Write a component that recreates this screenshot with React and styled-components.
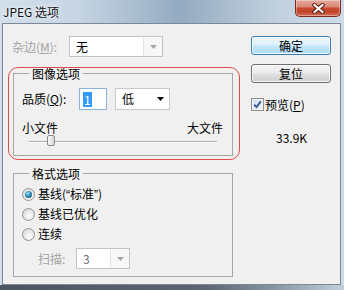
import React from "react";
import styled, { createGlobalStyle } from "styled-components";

const FONT = `"Noto Sans CJK SC", "Noto Sans", sans-serif`;

const GlobalStyle = createGlobalStyle`
  html, body { margin: 0; padding: 0; }
  body { width: 344px; height: 290px; overflow: hidden; font-family: ${FONT}; }
`;

const Window = styled.div`
  width: 344px;
  height: 290px;
  box-sizing: border-box;
  display: flex;
  flex-direction: column;
  padding: 0 3px 5px 2px;
  background:
    linear-gradient(90deg, #4d5560 0%, #5d6670 60%, #8896a5 80%, #c2d0de 100%) bottom / 100% 5px no-repeat,
    linear-gradient(90deg, #d2dfeb 0%, #c6d5e4 22%, #a9bdd0 40%, #93aac1 52%, #a7bacd 64%, #c3d2e0 82%, #cfdce8 100%);
  font-family: ${FONT};
  font-size: 12px;
  color: #000;
`;

const TitleBar = styled.div`
  height: 23px;
  flex: none;
  display: flex;
  align-items: flex-start;
  justify-content: space-between;
`;

const Title = styled.div`
  margin: 5px 0 0 1px;
  line-height: 13px;
  color: #111;
  text-shadow: 0 0 6px rgba(255, 255, 255, 0.9), 0 0 2px rgba(255, 255, 255, 0.8);
`;

const CloseButton = styled.div`
  width: 46px;
  height: 17px;
  box-sizing: border-box;
  border: 1px solid #7b2b1f;
  border-top: none;
  border-radius: 0 0 5px 5px;
  background: linear-gradient(180deg, #e6a99b 0%, #dc8b78 40%, #c94a31 52%, #c0432b 75%, #d8765c 100%);
  box-shadow: inset 0 0 0 1px rgba(255, 255, 255, 0.35);
  display: flex;
  align-items: center;
  justify-content: center;
`;

const Client = styled.div`
  flex: 1;
  display: flex;
  gap: 11px;
  box-sizing: border-box;
  border: 1px solid #7c8896;
  background: #f0f0f0;
  padding: 12px 0 0 5px;
`;

const LeftCol = styled.div`
  width: 232px;
  display: flex;
  flex-direction: column;
`;

const RightCol = styled.div`
  width: 80px;
  display: flex;
  flex-direction: column;
`;

const Row = styled.div`
  display: flex;
  align-items: center;
  height: ${(p) => p.$h || 20}px;
  padding-left: ${(p) => p.$pl || 0}px;
  margin-top: ${(p) => p.$mt || 0}px;
`;

const Label = styled.span`
  width: ${(p) => p.$w}px;
  flex: none;
  line-height: 14px;
  color: ${(p) => (p.$disabled ? "#a3a3a3" : "#000")};
`;

const Mnemonic = styled.span`
  text-decoration: underline;
  text-underline-offset: 1px;
`;

const SelectBox = styled.div`
  width: ${(p) => p.$w}px;
  height: ${(p) => p.$h}px;
  margin-left: ${(p) => p.$ml || 0}px;
  box-sizing: border-box;
  display: flex;
  border: 1px solid ${(p) => (p.$disabled ? "#c3c3c3" : "#c9c9c9")};
  background: #fff;
`;

const SelectValue = styled.span`
  flex: 1;
  padding-left: 6px;
  display: flex;
  align-items: center;
  line-height: 14px;
  color: ${(p) => (p.$disabled ? "#6d6d6d" : "#000")};
`;

const SelectButton = styled.span`
  width: ${(p) => (p.$plain ? 17 : 18)}px;
  flex: none;
  display: flex;
  align-items: center;
  justify-content: center;
  border-left: ${(p) => (p.$plain ? "none" : "1px solid #e4e4e4")};
  background: ${(p) => (p.$plain ? "#fff" : "#f7f7f7")};
`;

const Arrow = ({ color }) => (
  <svg width="7" height="4" viewBox="0 0 7 4">
    <path d="M0 0H7L3.5 4Z" fill={color} />
  </svg>
);

const Highlight = styled.div`
  margin-top: 10px;
  box-sizing: border-box;
  width: 232px;
  border: 1px solid #df4b4b;
  border-radius: 10px;
  padding: 0 6px 3px 4px;
`;

const GroupBox = styled.fieldset`
  margin: ${(p) => p.$m || 0};
  width: 220px;
  min-width: 0;
  box-sizing: border-box;
  border: 1px solid #a6a6a6;
  padding: ${(p) => p.$pad};
`;

const Legend = styled.legend`
  margin-left: 7px;
  padding: 0 3px;
  line-height: 11px;
  font-size: 12px;
`;

const TextInput = styled.div`
  width: 28px;
  height: 22px;
  box-sizing: border-box;
  border: 1px solid #8eb3d9;
  background: #fff;
  padding-left: 3px;
  display: flex;
  align-items: center;
`;

const Selected = styled.span`
  background: #3399ff;
  color: #fff;
  line-height: 15px;
  padding: 0 1px;
`;

const SizeLabels = styled.div`
  display: flex;
  justify-content: space-between;
  margin-top: 11px;
  line-height: 14px;
`;

const Slider = styled.div`
  height: 12px;
  margin: 0 6px 0 7px;
  position: relative;
  display: flex;
  align-items: center;
`;

const Groove = styled.div`
  flex: 1;
  height: 1px;
  background: #aeaeae;
  box-shadow: 0 1px 0 #ffffff;
`;

const Thumb = styled.div`
  position: absolute;
  top: 0;
  width: 8px;
  height: 11px;
  box-sizing: border-box;
  border: 1px solid #8c8c8c;
  border-radius: 2px;
  background: linear-gradient(90deg, #f7f7f7 0%, #e6e6e6 60%, #d4d4d4 100%);
`;

const Radio = styled.span`
  width: 13px;
  height: 13px;
  flex: none;
  box-sizing: border-box;
  border-radius: 50%;
  border: 1px solid #939393;
  background: radial-gradient(circle at 60% 65%, #fbfbfb 0%, #e9e9e9 45%, #d2d2d2 100%);
  display: flex;
  align-items: center;
  justify-content: center;
  margin-right: 3px;
  &::after {
    content: "";
    display: ${(p) => (p.$checked ? "block" : "none")};
    width: 7px;
    height: 7px;
    border-radius: 50%;
    background: radial-gradient(circle at 40% 35%, #a6e6f8 0%, #3492c0 40%, #0f4868 100%);
  }
`;

const RadioText = styled.span`
  line-height: 14px;
`;

const Quote = styled.span`
  font-family: "Liberation Sans", sans-serif;
`;

const Button = styled.div`
  height: 19px;
  box-sizing: border-box;
  margin-top: ${(p) => p.$mt || 0}px;
  border-radius: 3px;
  display: flex;
  align-items: center;
  justify-content: center;
  line-height: 14px;
  border: 1px solid ${(p) => (p.$primary ? "#3c7fb1" : "#707070")};
  background: ${(p) =>
    p.$primary
      ? "linear-gradient(180deg, #edf7fd 0%, #dcf1fc 48%, #c3e6fb 52%, #b0dcf6 100%)"
      : "linear-gradient(180deg, #f3f3f3 0%, #ececec 48%, #dedede 52%, #d0d0d0 100%)"};
  box-shadow: inset 0 0 0 1px rgba(255, 255, 255, 0.75);
`;

const CheckRow = styled.div`
  display: flex;
  align-items: center;
  gap: 1px;
  height: 18px;
  margin-top: 12px;
`;

const CheckBox = styled.span`
  width: 13px;
  height: 13px;
  flex: none;
  box-sizing: border-box;
  border: 1px solid #8f8f8f;
  background: linear-gradient(135deg, #cfdcea 0%, #eef4fa 100%);
  box-shadow: inset 0 0 0 1px #f4f4f4;
  display: flex;
  align-items: center;
  justify-content: center;
`;

const SizeText = styled.div`
  margin-top: 18px;
  padding-left: 25px;
  line-height: 14px;
`;

export default function App() {
  const quality = 1;
  const thumbLeft = Math.round(((quality - 0) / 12) * 188) + 2;
  return (
    <>
      <GlobalStyle />
      <Window>
        <TitleBar>
          <Title>JPEG 选项</Title>
          <CloseButton>
            <svg width="13" height="11" viewBox="0 0 13 11">
              <path d="M2.5 2 L10.5 9 M10.5 2 L2.5 9" stroke="#5a1d13" strokeWidth="4.2" strokeLinecap="square" />
              <path d="M2.5 2 L10.5 9 M10.5 2 L2.5 9" stroke="#ffffff" strokeWidth="2.2" strokeLinecap="square" />
            </svg>
          </CloseButton>
        </TitleBar>
        <Client>
          <LeftCol>
            <Row $h={21} $pl={4}>
              <Label $w={57} $disabled>
                杂边(<Mnemonic>M</Mnemonic>):
              </Label>
              <SelectBox $w={94} $h={21} $disabled>
                <SelectValue>无</SelectValue>
                <SelectButton>
                  <Arrow color="#a6a6a6" />
                </SelectButton>
              </SelectBox>
            </Row>
            <Highlight>
              <GroupBox $pad="9px 9px 8px 8px">
                <Legend>图像选项</Legend>
                <Row $h={22}>
                  <Label $w={57}>
                    品质(<Mnemonic>Q</Mnemonic>):
                  </Label>
                  <TextInput>
                    <Selected>1</Selected>
                  </TextInput>
                  <SelectBox $w={55} $h={22} $ml={8}>
                    <SelectValue>低</SelectValue>
                    <SelectButton $plain>
                      <Arrow color="#000" />
                    </SelectButton>
                  </SelectBox>
                </Row>
                <SizeLabels>
                  <span>小文件</span>
                  <span>大文件</span>
                </SizeLabels>
                <Slider>
                  <Groove />
                  <Thumb style={{ left: thumbLeft }} />
                </Slider>
              </GroupBox>
            </Highlight>
            <GroupBox $m="8px 0 0 5px" $pad="5px 9px 7px 8px">
              <Legend>格式选项</Legend>
              <Row>
                <Radio $checked />
                <RadioText>
                  基线(<Quote>“</Quote>标准<Quote>”</Quote>)
                </RadioText>
              </Row>
              <Row>
                <Radio />
                <RadioText>基线已优化</RadioText>
              </Row>
              <Row>
                <Radio />
                <RadioText>连续</RadioText>
              </Row>
              <Row $h={21} $pl={16} $mt={4}>
                <Label $w={38} $disabled>
                  扫描:
                </Label>
                <SelectBox $w={54} $h={21} $disabled>
                  <SelectValue $disabled>3</SelectValue>
                  <SelectButton>
                    <Arrow color="#a6a6a6" />
                  </SelectButton>
                </SelectBox>
              </Row>
            </GroupBox>
          </LeftCol>
          <RightCol>
            <Button $primary>确定</Button>
            <Button $mt={9}>复位</Button>
            <CheckRow>
              <CheckBox>
                <svg width="9" height="9" viewBox="0 0 9 9">
                  <path d="M1.2 4.6 L3.5 7 L7.8 1.4" fill="none" stroke="#34558f" strokeWidth="1.8" />
                </svg>
              </CheckBox>
              <span>
                预览(<Mnemonic>P</Mnemonic>)
              </span>
            </CheckRow>
            <SizeText>33.9K</SizeText>
          </RightCol>
        </Client>
      </Window>
    </>
  );
}
